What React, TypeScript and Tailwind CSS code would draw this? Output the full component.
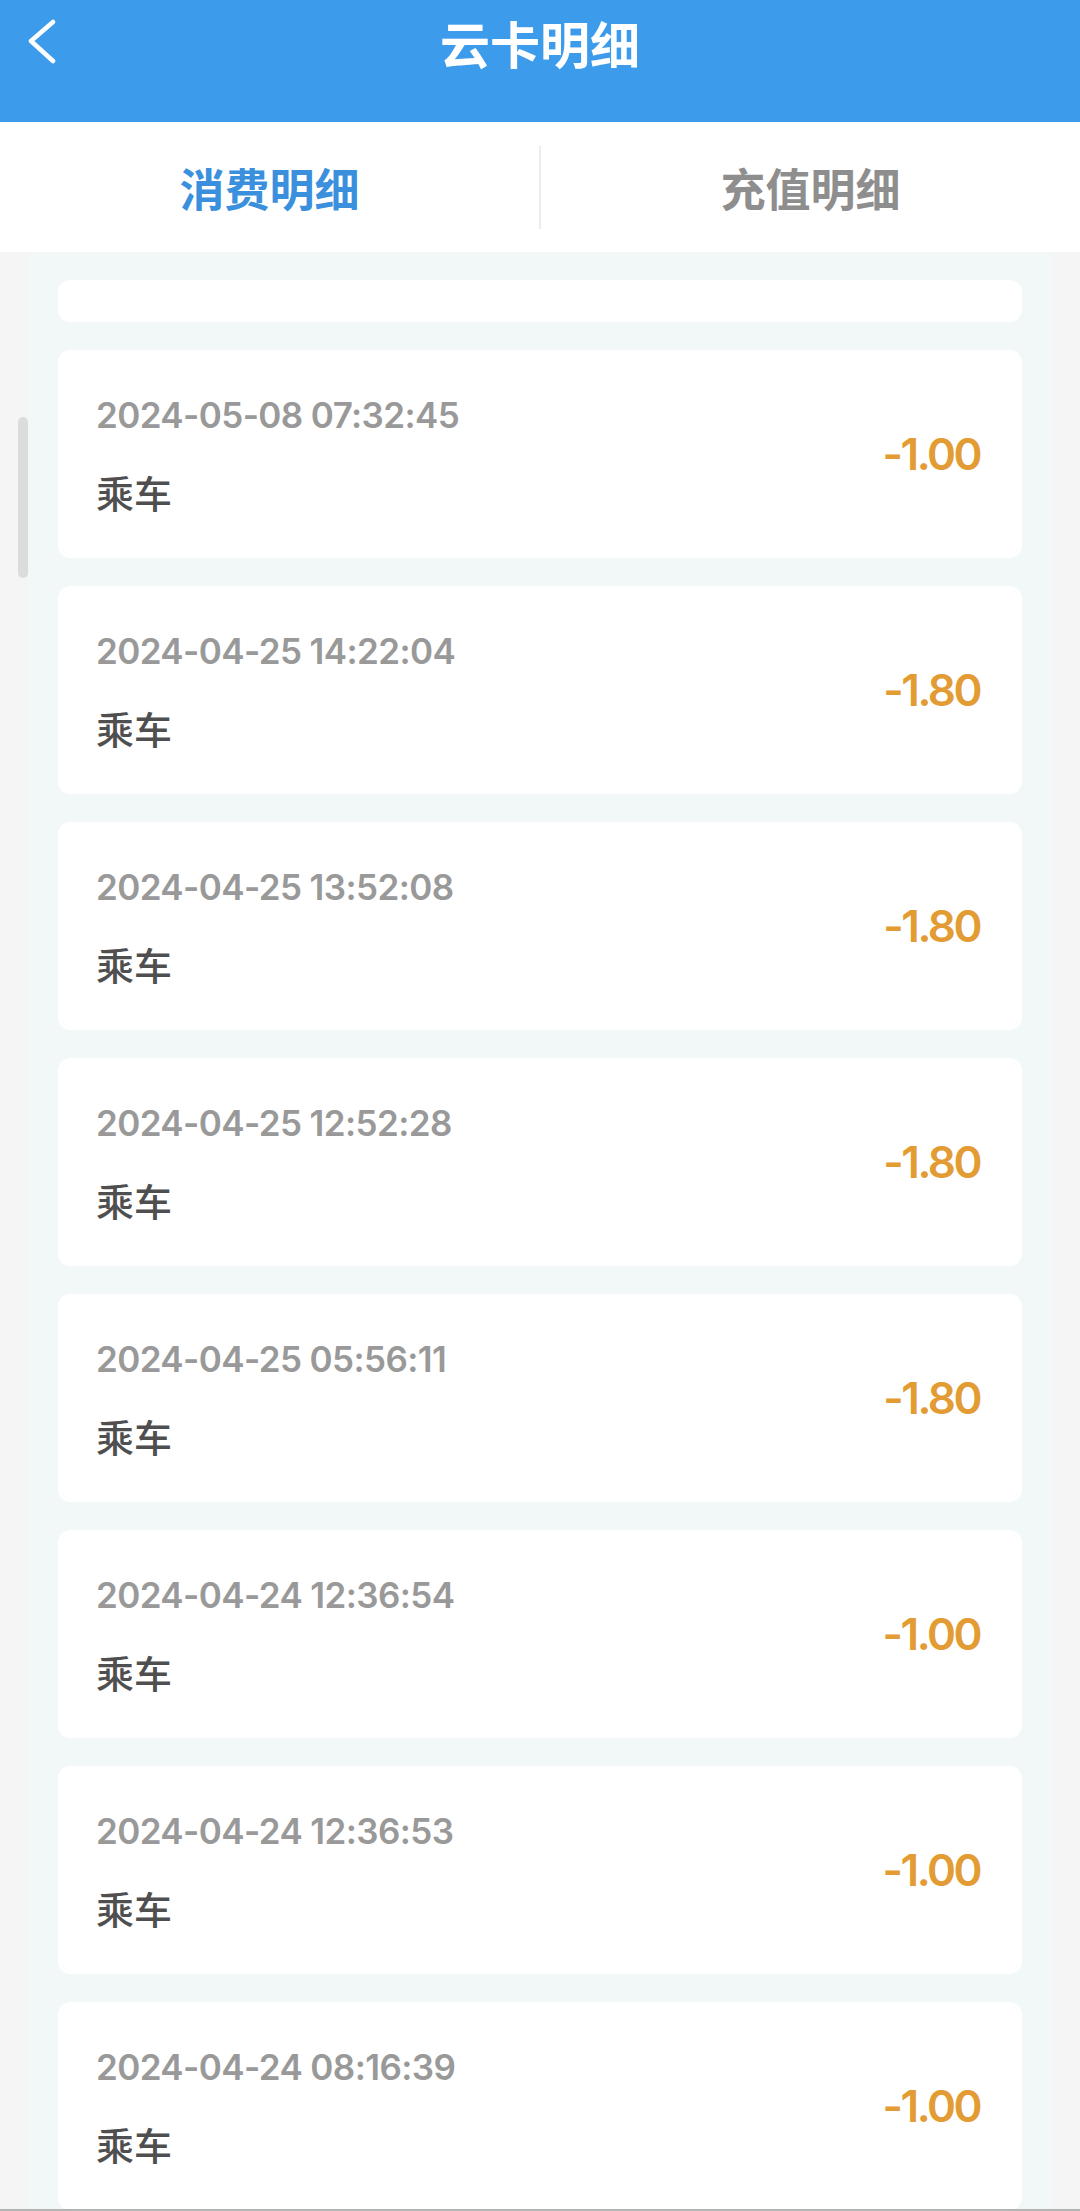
import React from "react";

const items = [
  { t: "2024-05-08 07:32:45", a: "-1.00" },
  { t: "2024-04-25 14:22:04", a: "-1.80" },
  { t: "2024-04-25 13:52:08", a: "-1.80" },
  { t: "2024-04-25 12:52:28", a: "-1.80" },
  { t: "2024-04-25 05:56:11", a: "-1.80" },
  { t: "2024-04-24 12:36:54", a: "-1.00" },
  { t: "2024-04-24 12:36:53", a: "-1.00" },
  { t: "2024-04-24 08:16:39", a: "-1.00" },
];

const cjk = { fontFamily: '"Noto Sans CJK SC", "Noto Sans", sans-serif' };
const num = { fontFamily: 'Inter, "Noto Sans CJK SC", sans-serif' };

export default function App() {
  return (
    <div className="relative h-[2211px] w-[1080px] overflow-hidden bg-[#f5f5f5] flex flex-col" style={cjk}>
      <header className="h-[122px] shrink-0 bg-[#3d9bec]">
        <div className="flex h-[84px] items-center">
          <div className="w-[120px] pl-[27px] flex items-center">
            <svg width="30" height="46" viewBox="0 0 30 46" fill="none">
              <path d="M26 3 L4 22 L26 42" stroke="#ffffff" strokeWidth="4.5" strokeLinecap="round" strokeLinejoin="round" />
            </svg>
          </div>
          <div className="flex-1 text-center text-[50px] font-bold leading-none text-white">云卡明细</div>
          <div className="w-[120px]" />
        </div>
      </header>
      <nav className="flex h-[130px] shrink-0 items-center bg-white">
        <div className="flex-1 text-center text-[45px] font-bold leading-none text-[#3b90dd]">消费明细</div>
        <div className="h-[83px] w-[2px] bg-[#ececec]" />
        <div className="flex-1 text-center text-[45px] font-bold leading-none text-[#8e8e8e]">充值明细</div>
      </nav>
      <main className="mx-[28px] flex-1 bg-[#f2f7f7] px-[30px] pt-[28px] flex flex-col gap-[28px]">
        <div className="h-[42px] shrink-0 rounded-[12px] bg-white" />
        {items.map((it, i) => (
          <div key={i} className="flex h-[208px] shrink-0 items-center justify-between rounded-[12px] bg-white pl-[38px] pr-[42px]">
            <div className="flex flex-col">
              <div className="text-[35px] font-semibold leading-[36px] tracking-[-0.6px] text-[#999999]" style={num}>{it.t}</div>
              <div className="mt-[40px] text-[38px] font-medium leading-[38px] text-[#4f4f4f]">乘车</div>
            </div>
            <div className="text-[44px] font-semibold leading-none tracking-[-2.5px] text-[#e39b34]" style={num}>{it.a}</div>
          </div>
        ))}
      </main>
      <div className="absolute left-[18px] top-[417px] h-[161px] w-[10px] rounded-full bg-[#dcdcdc]" />
      <div className="absolute bottom-0 left-0 h-[2px] w-full bg-[#b2b4b4]" />
    </div>
  );
}
